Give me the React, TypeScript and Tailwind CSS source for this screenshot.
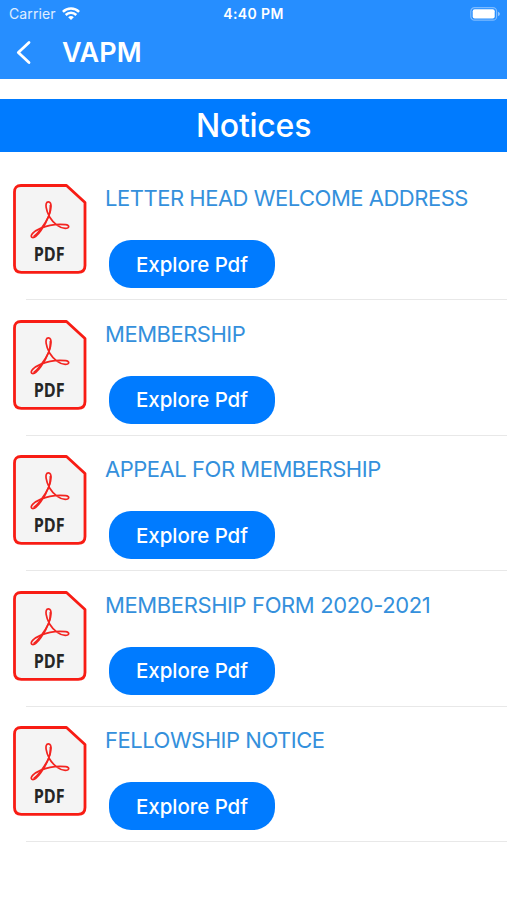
import React from 'react';

interface Notice {
  id: number;
  title: string;
  tracking: string;
}

const notices: Notice[] = [
  { id: 1, title: 'LETTER HEAD WELCOME ADDRESS', tracking: 'tracking-[-0.48px]' },
  { id: 2, title: 'MEMBERSHIP', tracking: 'tracking-[-0.48px]' },
  { id: 3, title: 'APPEAL FOR MEMBERSHIP', tracking: 'tracking-[-0.47px]' },
  { id: 4, title: 'MEMBERSHIP FORM 2020-2021', tracking: 'tracking-[-0.39px]' },
  { id: 5, title: 'FELLOWSHIP NOTICE', tracking: 'tracking-[-0.48px]' },
];

const WifiIcon = () => (
  <svg className="block" width="18" height="13" viewBox="0 0 18 13" fill="none" stroke="white" strokeWidth="2.5">
    <path d="M0.9 4.9C5.4 0.5 12.6 0.5 17.1 4.9" />
    <path d="M3.7 8C6.7 5.1 11.3 5.1 14.3 8" />
    <path d="M6.2 10.2C7.8 8.6 10.2 8.6 11.8 10.2L9 12.9Z" fill="white" stroke="none" />
  </svg>
);

const BatteryIcon = () => (
  <svg className="block" width="31" height="14" viewBox="0 0 31 14">
    <rect x="0.8" y="0.6" width="25.8" height="12.6" rx="3.8" fill="none" stroke="white" strokeOpacity="0.4" strokeWidth="1.2" />
    <rect x="2.7" y="2.2" width="22" height="9.4" rx="2" fill="white" />
    <path d="M28 4.7C30.5 5.5 30.5 8.3 28 9.1Z" fill="white" fillOpacity="0.5" />
  </svg>
);

const PdfIcon = () => (
  <svg className="block shrink-0" width="74" height="90" viewBox="0 0 74 90">
    <path
      d="M8 1.5H53.5L72 18.5V81.5Q72 88.3 65.2 88.3H8.3Q1.5 88.3 1.5 81.5V8Q1.5 1.5 8 1.5Z"
      fill="#f4f4f4"
      stroke="#f81c14"
      strokeWidth="2.8"
      strokeLinejoin="round"
    />
    <path
      d="M35.4 17.8C31 18 33.4 27.5 36.6 33C40.5 39.5 47 44.3 52.2 44.4C56.6 44.4 57 41.2 52.6 40.7C45 39.8 34.5 41.4 27.5 44.4C20 47.5 16.8 51.7 18.9 53.3C23.2 55.8 32.6 40.5 35.7 32.2C38.4 25.3 39.2 17.7 35.4 17.8Z"
      fill="none"
      stroke="#f32420"
      strokeWidth="1.7"
      strokeLinejoin="round"
    />
    <path d="M20.5 52.6C25.5 49.5 32.5 39 35.8 32C37.3 28 37.6 24 37.4 21" fill="none" stroke="#f32420" strokeWidth="1.7" />
    <text
      x="20.7"
      y="77"
      textLength="31"
      lengthAdjust="spacingAndGlyphs"
      className="font-['Open_Sans',sans-serif] text-[19px] font-bold"
      fill="#262626"
    >
      PDF
    </text>
  </svg>
);

const NoticeRow = ({ notice }: { notice: Notice }) => (
  <li className="h-[135.6px]">
    <div className="flex h-[135px] pt-5 pl-[13px]">
      <PdfIcon />
      <div className="ml-[18px]">
        <h2 className={`h-7 whitespace-nowrap text-[22px] leading-7 text-[#3490dc] ${notice.tracking}`}>{notice.title}</h2>
        <button className="mt-7 ml-1 block h-12 w-[166px] rounded-[22px] bg-[#007bff] pt-[2px] text-[20.5px] font-medium tracking-[-0.05px] text-white">
          Explore Pdf
        </button>
      </div>
    </div>
    <div className="ml-[26px] h-px bg-[#e8e8e8]" />
  </li>
);

export default function App() {
  return (
    <div className="h-[900px] w-full overflow-hidden bg-white font-['Inter',sans-serif]">
      <header className="h-[79px] bg-[#268eff] text-white">
        <div className="grid h-[27px] grid-cols-3 items-center px-[6px]">
          <div className="flex items-center gap-[6px] pl-[3px]">
            <span className="text-[14px] tracking-[0.1px] text-white/85">Carrier</span>
            <WifiIcon />
          </div>
          <span className="text-center text-[14px] font-semibold tracking-[0.4px]">4:40 PM</span>
          <div className="flex justify-end">
            <BatteryIcon />
          </div>
        </div>
        <div className="flex h-[52px] items-center pl-[16px]">
          <svg className="block" width="16" height="26" viewBox="0 0 16 26" fill="none" stroke="white" strokeWidth="2.8" strokeLinecap="round" strokeLinejoin="round">
            <path d="M13 2.5L2.3 12.5L13 22.5" />
          </svg>
          <h1 className="ml-[30px] pt-px text-[27px] font-semibold">VAPM</h1>
        </div>
      </header>

      <div className="mt-5 flex h-[53px] items-center justify-center bg-[#007bff]">
        <span className="text-[32px] font-medium tracking-[-0.25px] text-white">Notices</span>
      </div>

      <ul className="mt-3">
        {notices.map(notice => (
          <NoticeRow key={notice.id} notice={notice} />
        ))}
      </ul>
    </div>
  );
}
